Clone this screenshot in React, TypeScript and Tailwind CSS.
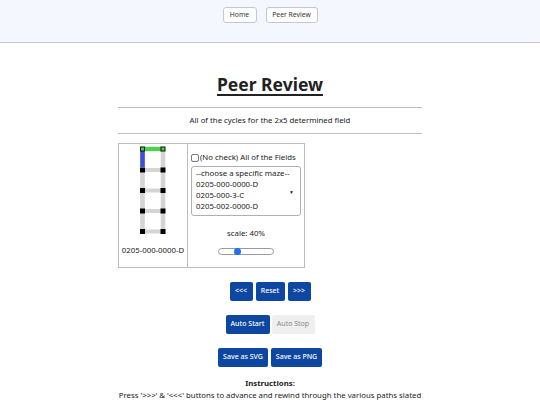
import React from 'react';

const options = ['--choose a specific maze--', '0205-000-0000-D', '0205-000-3-C', '0205-002-0000-D', '0205-002-3-C'];

function Maze() {
  const xs = [4.5, 25];
  const ys = [4, 25, 45.5, 66, 86.5];
  return (
    <svg width="30" height="91" viewBox="0 0 30 91">
      {xs.map((x) => (
        <rect key={'v' + x} x={x - 2.3} y={ys[0]} width="4.6" height={ys[4] - ys[0]} fill="#d4d4d4" />
      ))}
      {ys.slice(1).map((y) => (
        <rect key={'h' + y} x={xs[0]} y={y - 2} width={xs[1] - xs[0]} height="4" fill="#d4d4d4" />
      ))}
      <rect x={xs[0]} y={ys[0] - 2.2} width={xs[1] - xs[0]} height="4.4" fill="#4ad24a" />
      <rect x={xs[0] - 2.3} y={ys[0]} width="4.6" height={ys[1] - ys[0] - 3} fill="#3b4fd8" />
      {ys.slice(1).map((y) =>
        xs.map((x) => <rect key={x + '-' + y} x={x - 2.5} y={y - 2.5} width="5" height="5" fill="#000" />)
      )}
      {xs.map((x) => (
        <g key={'t' + x}>
          <rect x={x - 2.5} y={ys[0] - 2.5} width="5" height="5" fill="#111" />
          <rect x={x - 1.5} y={ys[0] - 1.5} width="3" height="3" fill="#4ad24a" />
        </g>
      ))}
    </svg>
  );
}

export default function App() {
  const blue = 'h-[19px] rounded-[2px] bg-[#0d47a1] text-white text-[7px] font-medium';
  return (
    <div className="min-h-screen bg-white font-['Noto_Sans',sans-serif] text-[#222]">
      <header className="flex h-[43px] justify-center gap-[9px] border-b border-[#c9cad4] bg-[#f5f7fe] pt-[7px]">
        <button className="h-[16px] w-[34px] rounded-[3px] border border-[#c4c6d2] bg-white text-[6.8px] text-[#333]">
          Home
        </button>
        <button className="h-[16px] w-[52px] rounded-[3px] border border-[#c4c6d2] bg-white text-[6.8px] text-[#333]">
          Peer Review
        </button>
      </header>

      <main className="mx-auto w-[304px]">
        <h1 className="mt-[29px] text-center text-[17.5px] leading-[24px] font-bold text-[#222] underline decoration-[1.5px] underline-offset-[3px]">
          Peer Review
        </h1>
        <hr className="mt-[11px] border-t border-[#bdbdbd]" />
        <div className="flex h-[25px] items-center justify-center text-[7.8px]">
          All of the cycles for the 2x5 determined field
        </div>
        <hr className="border-t border-[#bdbdbd]" />

        <div className="mt-[9px] flex h-[125px] w-[187px] border border-[#bdbdbd] text-[7.8px] leading-[11px]">
          <div className="flex w-[69px] flex-col items-center border-r border-[#bdbdbd] pt-[1px]">
            <Maze />
            <div className="mt-[9px] whitespace-nowrap">0205-000-0000-D</div>
          </div>
          <div className="flex flex-1 flex-col px-[3px] pt-[8px]">
            <label className="flex items-center gap-[1px] whitespace-nowrap">
              <span className="h-[8px] w-[8px] rounded-[2px] border border-[#777] bg-white" />
              (No check) All of the Fields
            </label>
            <div className="relative mt-[2.5px] h-[50px] overflow-hidden rounded-[3px] border border-[#b0b0b0] pt-[1px] pl-[4px] leading-[11.2px]">
              {options.map((o) => (
                <div key={o} className="whitespace-nowrap">{o}</div>
              ))}
              <span className="absolute top-[20px] right-[6px] text-[5px]">▼</span>
            </div>
            <div className="mt-[12px] text-center">scale: 40%</div>
            <div className="mt-[9px] flex justify-center">
              <div className="relative h-[7px] w-[56px] rounded-full border border-[#999] bg-white">
                <span className="absolute top-[-1px] left-[15px] h-[7px] w-[7px] rounded-full bg-[#1a73e8]" />
              </div>
            </div>
          </div>
        </div>

        <div className="mt-[14px] flex justify-center gap-[3px]">
          <button className={blue + ' w-[23px]'}>&lt;&lt;&lt;</button>
          <button className={blue + ' w-[29px]'}>Reset</button>
          <button className={blue + ' w-[23px]'}>&gt;&gt;&gt;</button>
        </div>
        <div className="mt-[14px] flex justify-center gap-[2px]">
          <button className={blue + ' w-[44px]'}>Auto Start</button>
          <button className="h-[19px] w-[43px] rounded-[2px] bg-[#efefef] text-[7px] text-[#888]">Auto Stop</button>
        </div>
        <div className="mt-[14px] flex justify-center gap-[3px]">
          <button className={blue + ' w-[50px]'}>Save as SVG</button>
          <button className={blue + ' w-[51px]'}>Save as PNG</button>
        </div>

        <div className="mt-[10px] text-center text-[7.8px] leading-[12px]">
          <div className="font-bold">Instructions:</div>
          <div>Press '&gt;&gt;&gt;' &amp; '&lt;&lt;&lt;' buttons to advance and rewind through the various paths slated to be displayed.</div>
        </div>
      </main>
    </div>
  );
}
